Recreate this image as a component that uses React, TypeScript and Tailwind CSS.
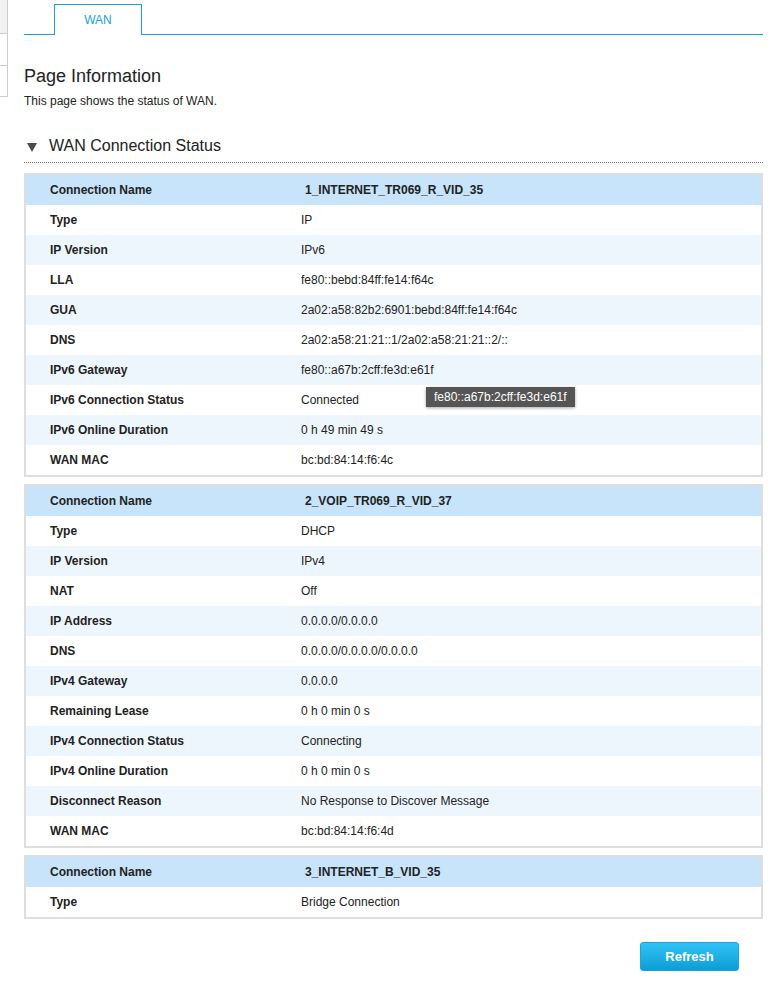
import React from "react";

type Row = [string, string];

const tables: { name: string; rows: Row[] }[] = [
  {
    name: "1_INTERNET_TR069_R_VID_35",
    rows: [
      ["Type", "IP"],
      ["IP Version", "IPv6"],
      ["LLA", "fe80::bebd:84ff:fe14:f64c"],
      ["GUA", "2a02:a58:82b2:6901:bebd:84ff:fe14:f64c"],
      ["DNS", "2a02:a58:21:21::1/2a02:a58:21:21::2/::"],
      ["IPv6 Gateway", "fe80::a67b:2cff:fe3d:e61f"],
      ["IPv6 Connection Status", "Connected"],
      ["IPv6 Online Duration", "0 h 49 min 49 s"],
      ["WAN MAC", "bc:bd:84:14:f6:4c"],
    ],
  },
  {
    name: "2_VOIP_TR069_R_VID_37",
    rows: [
      ["Type", "DHCP"],
      ["IP Version", "IPv4"],
      ["NAT", "Off"],
      ["IP Address", "0.0.0.0/0.0.0.0"],
      ["DNS", "0.0.0.0/0.0.0.0/0.0.0.0"],
      ["IPv4 Gateway", "0.0.0.0"],
      ["Remaining Lease", "0 h 0 min 0 s"],
      ["IPv4 Connection Status", "Connecting"],
      ["IPv4 Online Duration", "0 h 0 min 0 s"],
      ["Disconnect Reason", "No Response to Discover Message"],
      ["WAN MAC", "bc:bd:84:14:f6:4d"],
    ],
  },
  {
    name: "3_INTERNET_B_VID_35",
    rows: [["Type", "Bridge Connection"]],
  },
];

function StatusTable({ name, rows, tip }: { name: string; rows: Row[]; tip?: boolean }) {
  return (
    <div className="border-2 border-[#dedede] bg-white">
      {/* header */}
      <div className="flex h-[30px] items-center bg-[#c7e4fb] text-[12px] font-bold text-[#222]">
        <div className="w-[275px] pl-[24px]">Connection Name</div>
        <div className="pl-[4px]">{name}</div>
      </div>
      {rows.map(([k, v], i) => (
        <div
          key={k}
          className={
            "relative flex h-[30px] items-center text-[12px] text-[#222] " +
            (i % 2 === 1 ? "bg-[#eef6fd]" : "bg-white")
          }
        >
          <div className="w-[275px] pl-[24px] font-bold">{k}</div>
          <div>{v}</div>
          {tip && k === "IPv6 Connection Status" && (
            <div className="absolute left-[400px] top-[2px] bg-[#555555] px-[8px] py-[2px] text-[12px] leading-[16px] text-white shadow-[0_1px_3px_rgba(0,0,0,0.35)]">
              fe80::a67b:2cff:fe3d:e61f
            </div>
          )}
        </div>
      ))}
    </div>
  );
}

export default function App() {
  return (
    <div className="flex min-h-[999px] bg-white font-['Liberation_Sans',Arial,sans-serif] text-[#333]">
      {/* cut-off side menu */}
      <div className="w-[8px] shrink-0 self-start border-r border-[#cccccc]">
        <div className="h-[34px] border-b border-[#cccccc] bg-[#f2f2f2]" />
        <div className="h-[32px] border-b border-[#cccccc]" />
        <div className="h-[31px] border-b border-[#cccccc]" />
      </div>

      <div className="flex-1 pl-[16px] pr-[16px] pt-[4px]">
        {/* tabs */}
        <div className="flex items-end">
          <div className="h-[31px] w-[30px] border-b border-[#1ba1d8]" />
          <div className="flex h-[31px] w-[88px] items-center justify-center border-x border-t border-[#1ba1d8] bg-white text-[12px] text-[#1ba1d8]">
            WAN
          </div>
          <div className="h-[31px] flex-1 border-b border-[#1ba1d8]" />
        </div>

        <h1 className="mt-[30px] text-[18px] leading-[22px] text-[#222]">Page Information</h1>
        <p className="mt-[6px] text-[12px] leading-[16px] text-[#222]">This page shows the status of WAN.</p>

        <div className="mt-[27px] flex items-center gap-[12px] pl-[3px]">
          <svg width="10" height="9" viewBox="0 0 10 9" className="mt-[3px]">
            <path d="M0 0 L10 0 L5 9 Z" fill="#4a4a4a" />
          </svg>
          <span className="text-[16px] leading-[20px] text-[#222]">WAN Connection Status</span>
        </div>
        <div className="mt-[6px] border-b border-dotted border-[#777]" />

        <div className="mt-[10px] flex flex-col gap-[7px]">
          {tables.map((t, i) => (
            <StatusTable key={t.name} name={t.name} rows={t.rows} tip={i === 0} />
          ))}
        </div>

        <div className="mt-[23px] flex justify-end pr-[24px]">
          <button className="h-[29px] w-[99px] rounded-[3px] border border-[#1aa6dc] bg-gradient-to-b from-[#2fc3f6] to-[#0a9dd5] text-[13px] font-bold text-white">
            Refresh
          </button>
        </div>
      </div>
    </div>
  );
}
